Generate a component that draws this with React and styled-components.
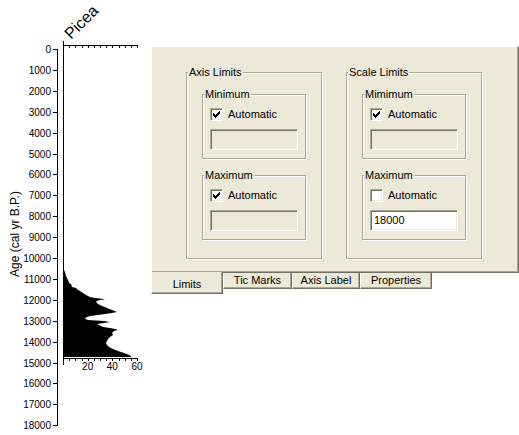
import React from 'react';
import styled, { createGlobalStyle } from 'styled-components';

const GlobalStyle = createGlobalStyle`
  html, body {
    margin: 0;
    padding: 0;
    background: #ffffff;
  }
  body {
    font-family: "Liberation Sans", Arial, sans-serif;
    font-size: 11px;
    color: #000000;
  }
`;

const Page = styled.div`
  display: flex;
  align-items: flex-start;
  width: 519px;
  height: 435px;
  overflow: hidden;
`;

const ChartSvg = styled.svg`
  flex: none;
  display: block;
  font-family: "Liberation Sans", Arial, sans-serif;
`;

const Dialog = styled.div`
  flex: none;
  width: 368px;
  margin-top: 46px;
  display: flex;
  flex-direction: column;
`;

const TabPanel = styled.div`
  box-sizing: border-box;
  height: 227px;
  background: #ece9d8;
  border-top: 1px solid #ffffff;
  border-left: 1px solid #ffffff;
  border-right: 1px solid #716f64;
  border-bottom: 1px solid #716f64;
  box-shadow: inset -1px -1px 0 #aca899;
  padding: 25px 0 0 34px;
  display: flex;
  align-items: flex-start;
  gap: 24px;
`;

const Group = styled.div`
  position: relative;
  box-sizing: border-box;
  width: ${p => p.$w}px;
  border: 1px solid #aca899;
  box-shadow: 1px 1px 0 #ffffff, inset 1px 1px 0 #ffffff;
  padding: ${p => p.$pad};
  display: flex;
  flex-direction: column;
  gap: ${p => p.$gap}px;
`;

const Legend = styled.span`
  position: absolute;
  top: -7px;
  left: 1px;
  padding: 0 1px;
  line-height: 13px;
  background: #ece9d8;
  white-space: nowrap;
`;

const CheckRow = styled.label`
  display: flex;
  align-items: center;
  gap: 5px;
  height: 13px;
  line-height: 13px;
`;

const CheckBox = styled.span`
  box-sizing: border-box;
  width: 13px;
  height: 13px;
  flex: none;
  background: #ffffff;
  border-top: 1px solid #aca899;
  border-left: 1px solid #aca899;
  border-right: 1px solid #ffffff;
  border-bottom: 1px solid #ffffff;
  box-shadow: inset 1px 1px 0 #716f64, inset -1px -1px 0 #f1efe2;
  display: flex;
  align-items: center;
  justify-content: center;
`;

const TextBox = styled.div`
  box-sizing: border-box;
  width: 88px;
  height: 21px;
  margin-top: 8px;
  background: ${p => (p.$enabled ? '#ffffff' : '#ece9d8')};
  border-top: 1px solid #aca899;
  border-left: 1px solid #aca899;
  border-right: 1px solid #ffffff;
  border-bottom: 1px solid #ffffff;
  box-shadow: inset 1px 1px 0 #716f64, inset -1px -1px 0 #f1efe2;
  padding: 0 3px;
  line-height: 19px;
`;

const TabStrip = styled.div`
  display: flex;
  align-items: flex-start;
`;

const Tab = styled.div`
  box-sizing: border-box;
  width: ${p => p.$w}px;
  height: ${p => (p.$active ? 22 : 16)}px;
  margin-top: ${p => (p.$active ? -1 : 0)}px;
  background: #ece9d8;
  border-left: 1px solid #ffffff;
  border-right: 1px solid #716f64;
  border-bottom: 1px solid #716f64;
  box-shadow: inset -1px -1px 0 #aca899;
  text-align: center;
  line-height: ${p => (p.$active ? 25 : 15)}px;
  position: relative;
`;

const Check = () => (
  <svg width="7" height="7" viewBox="0 0 7 7">
    <path d="M0 2h1v1h1v1h1V3h1V2h1V1h1V0h1v3H6v1H5v1H4v1H3v1H2V6H1V5H0z" fill="#000" />
  </svg>
);

const LimitBox = ({ title, checked, value }) => (
  <Group $w={104} $pad="13px 0 8px 7px" $gap={0}>
    <Legend>{title}</Legend>
    <CheckRow>
      <CheckBox>{checked && <Check />}</CheckBox>
      Automatic
    </CheckRow>
    <TextBox $enabled={!checked}>{value}</TextBox>
  </Group>
);

const LimitGroup = ({ title, minTitle, maxChecked, maxValue }) => (
  <Group $w={136} $pad="21px 0 18px 15px" $gap={16}>
    <Legend>{title}</Legend>
    <LimitBox title={minTitle} checked />
    <LimitBox title="Maximum" checked={maxChecked} value={maxValue} />
  </Group>
);

const profile = [
  [63, 265], [64, 265], [64, 270], [65, 272], [66, 276], [67, 278], [68, 280], [69, 283],
  [71, 284], [72, 287], [76, 288], [78, 290], [80, 291], [83, 293], [86, 295], [90, 297],
  [95, 298], [100, 298.5], [105, 299.5], [100, 300], [97, 301], [96, 302], [98, 304],
  [102, 306], [107, 308], [112, 310], [117, 312], [112, 313], [105, 314], [98, 315],
  [90, 316], [86, 317.5], [85, 319], [88, 320], [96, 320.5], [104, 321], [110, 322],
  [104, 323], [97, 324], [100, 325.5], [103, 327], [110, 328], [115, 329], [118, 330],
  [114, 331], [112, 333], [113, 335], [110, 337], [108, 339], [107, 341], [106, 343],
  [107, 345], [109, 347], [113, 349], [118, 351], [124, 353], [128, 354.5], [131, 356],
  [131, 357], [63, 357],
];

const ages = Array.from({ length: 19 }, (_, i) => i * 1000);
const ageY = a => 49 + (a / 1000) * 20.9;
const pctX = v => 63 + (v / 60) * 74;

const Diagram = () => (
  <ChartSvg width="151" height="435" viewBox="0 0 151 435">
    <text x="71" y="40" fontSize="16" transform="rotate(-45 71 40)">Picea</text>
    <text x="19" y="234" fontSize="12" textAnchor="middle" transform="rotate(-90 19 234)">
      Age (cal yr B.P.)
    </text>

    <line x1="57.5" y1="49" x2="57.5" y2="425" stroke="#000" />
    {ages.map(a => (
      <g key={a}>
        <line x1="53" y1={Math.round(ageY(a)) + 0.5} x2="58" y2={Math.round(ageY(a)) + 0.5} stroke="#000" />
        <text x="51" y={Math.round(ageY(a)) + 4} fontSize="10" textAnchor="end">{a}</text>
      </g>
    ))}

    <polygon points={profile.map(p => p.join(',')).join(' ')} fill="#000" />

    <line x1="63.5" y1="41" x2="63.5" y2="365" stroke="#000" />
    <line x1="63" y1="45.5" x2="138" y2="45.5" stroke="#000" />
    <line x1="63" y1="358.5" x2="138" y2="358.5" stroke="#000" />
    {Array.from({ length: 13 }, (_, i) => Math.round(pctX(i * 5)) + 0.5).map(x => (
      <g key={x}>
        <line x1={x} y1="46" x2={x} y2="48" stroke="#000" />
        <line x1={x} y1="359" x2={x} y2="361" stroke="#000" />
      </g>
    ))}
    {[20, 40, 60].map(v => (
      <text key={v} x={pctX(v)} y="370" fontSize="10" textAnchor="middle">{v}</text>
    ))}
  </ChartSvg>
);

export default function App() {
  return (
    <>
      <GlobalStyle />
      <Page>
        <Diagram />
        <Dialog>
          <TabPanel>
            <LimitGroup title="Axis Limits" minTitle="Minimum" maxChecked />
            <LimitGroup title="Scale Limits" minTitle="Mimimum" maxChecked={false} maxValue="18000" />
          </TabPanel>
          <TabStrip>
            <Tab $w={72} $active>Limits</Tab>
            <Tab $w={69}>Tic Marks</Tab>
            <Tab $w={68}>Axis Label</Tab>
            <Tab $w={72}>Properties</Tab>
          </TabStrip>
        </Dialog>
      </Page>
    </>
  );
}
